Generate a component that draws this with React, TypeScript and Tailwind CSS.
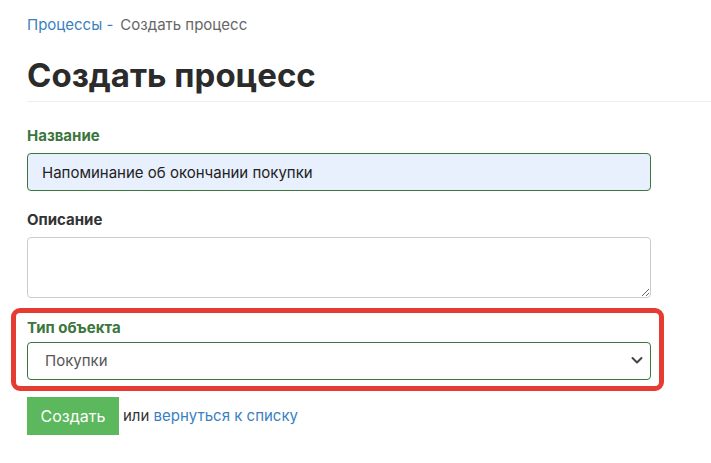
export default function App() {
  return (
    <div className="min-h-screen bg-white pl-[27px] font-['Inter','Liberation_Sans',sans-serif] text-[#333]">
      {/* breadcrumbs */}
      <div className="pt-[15px] text-[15px] leading-[20px]">
        <a href="#" className="text-[#3a7fc1]">Процессы -</a>
        <span className="ml-[7px] text-[#666]">Создать процесс</span>
      </div>

      {/* page header */}
      <div className="mt-[20px] border-b border-[#eee] pb-[6px]">
        <h1 className="text-[33px] font-bold leading-[40px] text-[#2b2b2b]">
          Создать процесс
        </h1>
      </div>

      <form className="w-[624px] pt-[24px]">
        <div>
          <label className="block text-[15px] font-bold leading-[20px] text-[#3c763d]">Название</label>
          <input
            defaultValue="Напоминание об окончании покупки"
            className="mt-[7px] block h-[38px] w-full rounded-[4px] border border-[#3c763d] bg-[#e8f0fe] px-[14px] text-[15px] text-[#222] outline-none"
          />
        </div>

        <div className="mt-[19px]">
          <label className="block text-[15px] font-bold leading-[20px] text-[#333]">Описание</label>
          <textarea className="mt-[7px] block h-[61px] w-full rounded-[4px] border border-[#ccc] bg-white px-[14px] py-[6px] text-[15px] outline-none" />
        </div>

        <div className="relative mt-[20px]">
          {/* highlight annotation */}
          <div className="pointer-events-none absolute -top-[10px] -bottom-[11px] -left-[16px] -right-[13px] rounded-[9px] border-[5px] border-[#e53b30]" />
          <label className="block text-[15px] font-bold leading-[20px] text-[#3c763d]">Тип объекта</label>
          <div className="relative mt-[4px]">
            <select className="block h-[38px] w-full appearance-none rounded-[4px] border border-[#3c763d] bg-white px-[17px] text-[15px] text-[#555] outline-none">
              <option>Покупки</option>
            </select>
            <svg
              className="pointer-events-none absolute right-[8px] top-[14px]"
              width="12"
              height="9"
              viewBox="0 0 12 9"
              fill="none"
            >
              <path d="M1.5 2l4.5 4.5L10.5 2" stroke="#444" strokeWidth="2" strokeLinecap="round" strokeLinejoin="round" />
            </svg>
          </div>
        </div>

        <div className="mt-[17px] flex items-center">
          <button type="button" className="h-[38px] w-[92px] bg-[#5cb85c] text-[16px] text-white">
            Создать
          </button>
          <span className="ml-[4px] text-[15px] text-[#333]">
            или <a href="#" className="text-[#3a7fc1]">вернуться к списку</a>
          </span>
        </div>
      </form>
    </div>
  );
}
